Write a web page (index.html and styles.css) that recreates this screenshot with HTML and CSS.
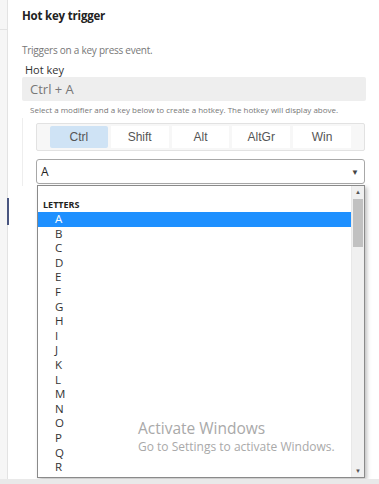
FILE: index.html
```html
<!DOCTYPE html>
<html lang="en">
<head>
    <meta charset="UTF-8">
    <meta name="viewport" content="width=device-width, initial-scale=1.0">
    <title>Hot key trigger</title>
    <link rel="stylesheet" href="styles.css">
</head>
<body>
    <div class="page">
        <div class="rail">
            <div class="rail-top"></div>
            <div class="rail-mark"></div>
        </div>
        <div class="panel">
            <div class="panel-title">Hot key trigger</div>
            <div class="desc">Triggers on a key press event.</div>
            <div class="field-label">Hot key</div>
            <div class="hotkey-box">Ctrl + A</div>
            <div class="hint">Select a modifier and a key below to create a hotkey. The hotkey will display above.</div>

            <div class="editor">
                <div class="modifiers">
                    <button class="mod active">Ctrl</button>
                    <button class="mod">Shift</button>
                    <button class="mod">Alt</button>
                    <button class="mod">AltGr</button>
                    <button class="mod">Win</button>
                </div>
                <div class="key-select">
                    <span>A</span>
                    <span class="caret">&#9660;</span>
                </div>
                <div class="key-list">
                    <div class="options">
                        <div class="group">LETTERS</div>
                        <div class="opt selected">A</div>
                        <div class="opt">B</div>
                        <div class="opt">C</div>
                        <div class="opt">D</div>
                        <div class="opt">E</div>
                        <div class="opt">F</div>
                        <div class="opt">G</div>
                        <div class="opt">H</div>
                        <div class="opt">I</div>
                        <div class="opt">J</div>
                        <div class="opt">K</div>
                        <div class="opt">L</div>
                        <div class="opt">M</div>
                        <div class="opt">N</div>
                        <div class="opt">O</div>
                        <div class="opt">P</div>
                        <div class="opt">Q</div>
                        <div class="opt">R</div>
                        <div class="opt">S</div>
                    </div>
                    <div class="scrollbar">
                        <div class="arrow">&#9650;</div>
                        <div class="track"><div class="thumb"></div></div>
                        <div class="arrow">&#9660;</div>
                    </div>
                </div>
            </div>
        </div>
    </div>
    <div class="watermark">
        <div class="wm-title">Activate Windows</div>
        <div class="wm-sub">Go to Settings to activate Windows.</div>
    </div>
</body>
</html>
```

FILE: styles.css
```css
html {
    background: #e9e9e9;
}
body {
    margin: 0;
    font-family: "Open Sans", Arial, sans-serif;
    color: #333;
}
.page {
    display: flex;
    height: 479px;
    background: #ffffff;
    overflow: hidden;
}
.rail {
    position: relative;
    width: 7px;
    flex-shrink: 0;
    background: #f6f6f6;
    border-right: 1px solid #e3e3e3;
}
.rail-top {
    height: 29px;
    border-bottom: 1px solid #e3e3e3;
}
.rail-mark {
    position: absolute;
    top: 198px;
    right: -2px;
    width: 2px;
    height: 27px;
    background: #4a5680;
}
.panel {
    flex: 1;
    padding: 0 13px 0 14px;
}
.panel-title {
    font-size: 11.5px;
    font-weight: bold;
    letter-spacing: -0.2px;
    color: #222;
    padding-top: 8px;
    height: 35px;
}
.desc {
    font-size: 10px;
    letter-spacing: -0.25px;
    color: #777;
    line-height: 14px;
}
.field-label {
    font-size: 11px;
    color: #333;
    margin: 5px 0 0 3px;
    line-height: 15px;
}
.hotkey-box {
    height: 24px;
    line-height: 24px;
    background: #eeeeee;
    border-radius: 2px;
    padding-left: 8px;
    font-size: 13px;
    color: #777;
}
.hint {
    font-size: 8px;
    color: #777;
    padding-left: 8px;
    line-height: 17px;
}
.editor {
    position: relative;
    border-left: 1px solid #eeeeee;
    padding: 5px 1px 2px 13px;
}
.modifiers {
    display: flex;
    gap: 3px;
    padding: 2px 13px;
    border: 1px solid #e2e2e2;
    background: #f7f7f7;
    border-radius: 2px;
}
.mod {
    flex: 1;
    height: 22px;
    border: none;
    background: #ffffff;
    font-family: "Liberation Sans", Arial, sans-serif;
    font-size: 12px;
    color: #555;
    padding: 0;
}
.mod.active {
    background: #cfe3f5;
    border-radius: 2px;
}
.key-select {
    display: flex;
    justify-content: space-between;
    align-items: center;
    margin-top: 8px;
    height: 23px;
    border: 1px solid #a8a8a8;
    border-radius: 3px;
    padding: 0 5px 0 4px;
    font-size: 12px;
    color: #222;
}
.caret {
    font-size: 8px;
    color: #444;
}
.key-list {
    position: absolute;
    top: 67px;
    left: 14px;
    width: 326px;
    height: 291px;
    display: flex;
    background: #fff;
    border: 1px solid #8a8a8a;
    box-shadow: 2px 2px 4px rgba(0, 0, 0, 0.25);
    overflow: hidden;
}
.options {
    flex: 1;
    padding-top: 12px;
}
.group {
    font-size: 9px;
    font-weight: bold;
    color: #222;
    padding-left: 5px;
    line-height: 14px;
}
.opt {
    font-size: 11.5px;
    line-height: 14.6px;
    padding-left: 17px;
    color: #333;
}
.opt.selected {
    background: #1e90ff;
    color: #fff;
}
.scrollbar {
    width: 12px;
    display: flex;
    flex-direction: column;
    background: #f0f0f0;
    border-left: 1px solid #e8e8e8;
}
.arrow {
    height: 12px;
    font-size: 6px;
    line-height: 12px;
    text-align: center;
    color: #555;
}
.track {
    flex: 1;
}
.thumb {
    margin: 1px 1px 0;
    height: 48px;
    background: #c1c1c1;
}
.watermark {
    position: absolute;
    top: 418px;
    left: 138px;
    color: #a9a9a9;
    pointer-events: none;
}
.wm-title {
    font-size: 15.5px;
    line-height: 21px;
}
.wm-sub {
    font-size: 12px;
    line-height: 16px;
}
```
